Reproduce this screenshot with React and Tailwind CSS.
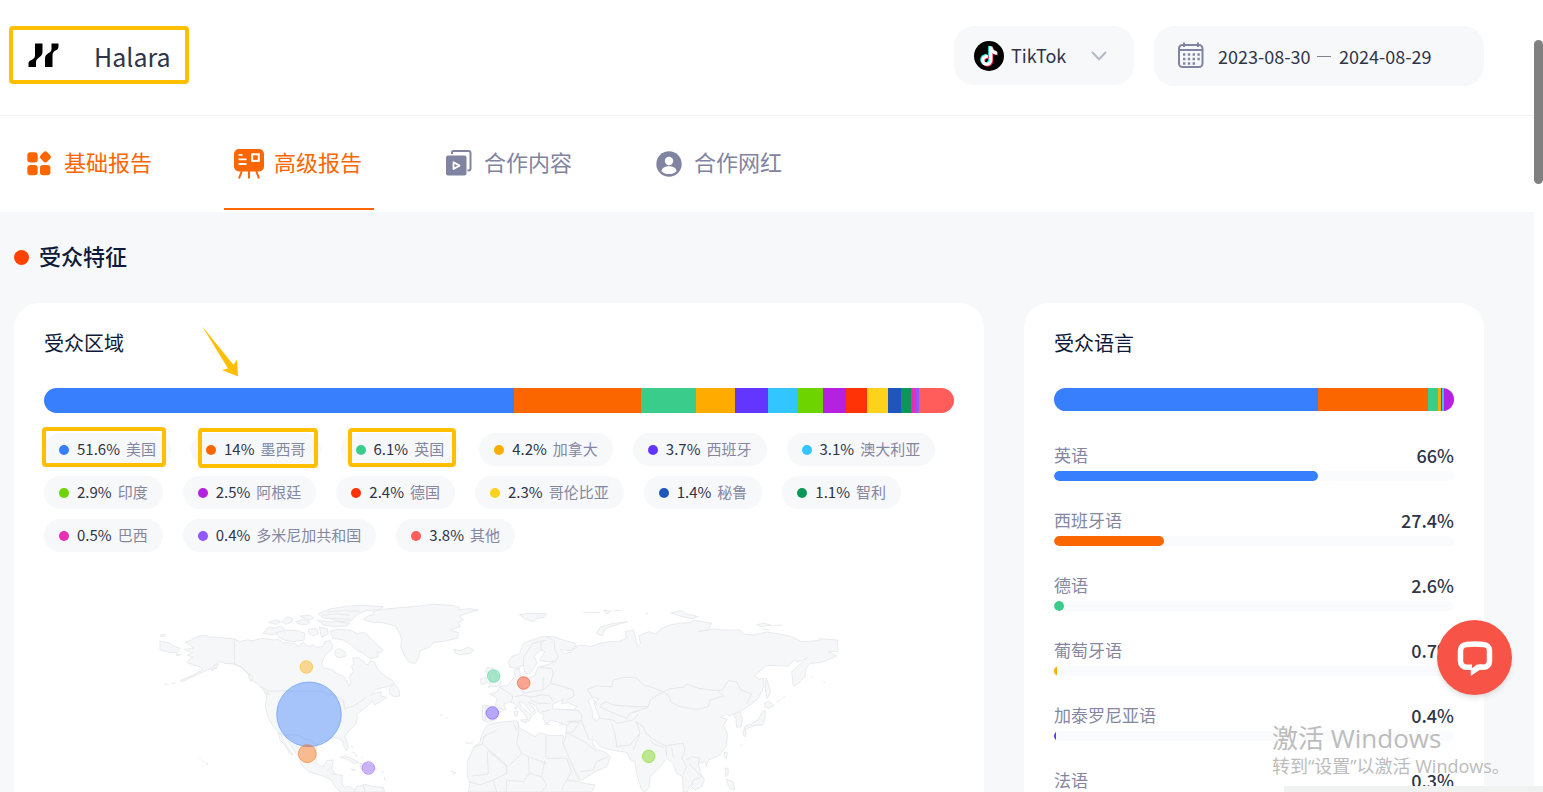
import React from "react";

const REGIONS = [
  { pct: 51.6, name: "美国", color: "#387ffd", mark: "-left-[2px] right-[5px] -top-[6px] -bottom-[1px]" },
  { pct: 14, name: "墨西哥", color: "#fc6600", mark: "left-[7px] right-[3px] -top-[5px] -bottom-[2px]" },
  { pct: 6.1, name: "英国", color: "#3acc8b", mark: "left-[7px] right-[3px] -top-[5px] -bottom-[1px]" },
  { pct: 4.2, name: "加拿大", color: "#ffab00" },
  { pct: 3.7, name: "西班牙", color: "#6236ff" },
  { pct: 3.1, name: "澳大利亚", color: "#33c5ff" },
  { pct: 2.9, name: "印度", color: "#6dd400" },
  { pct: 2.5, name: "阿根廷", color: "#b620e0" },
  { pct: 2.4, name: "德国", color: "#ff3306" },
  { pct: 2.3, name: "哥伦比亚", color: "#fcd31a" },
  { pct: 1.4, name: "秘鲁", color: "#2056bb" },
  { pct: 1.1, name: "智利", color: "#0d9757" },
  { pct: 0.5, name: "巴西", color: "#e92db5" },
  { pct: 0.4, name: "多米尼加共和国", color: "#9257ff" },
  { pct: 3.8, name: "其他", color: "#ff5c5c" },
];

const LANGUAGES = [
  { pct: 66, name: "英语", color: "#387ffd" },
  { pct: 27.4, name: "西班牙语", color: "#fc6600" },
  { pct: 2.6, name: "德语", color: "#3acc8b" },
  { pct: 0.7, name: "葡萄牙语", color: "#ffab00" },
  { pct: 0.4, name: "加泰罗尼亚语", color: "#6236ff" },
  { pct: 0.3, name: "法语", color: "#33c5ff" },
];

const LANGUAGE_BAR = [...LANGUAGES, { pct: 2.6, name: "其他", color: "#b620e0" }];

const BUBBLES = [
  { x: 469, y: 231, r: 19, color: "#ffab00" },
  { x: 477, y: 373, r: 97, color: "#387ffd" },
  { x: 472, y: 491, r: 27, color: "#fc6600" },
  { x: 655, y: 534, r: 19, color: "#9257ff" },
  { x: 1031, y: 258, r: 19, color: "#3acc8b" },
  { x: 1121, y: 279, r: 19, color: "#ff3306" },
  { x: 1027, y: 369, r: 19, color: "#6236ff" },
  { x: 1496, y: 499, r: 19, color: "#6dd400" },
];

function HalaraLogo() {
  return (
    <svg width="32" height="26" viewBox="0 0 32 26" aria-hidden="true">
      <path d="M8 1.500H15.500V10C15.500 13 13.500 14.500 11.500 16C9.500 17.500 9 18.500 9 20.500V25H1.500V21.500C1.500 19.500 2.500 19 4 18.200C6.500 17 8 16 8 13.500Z" />
      <path d="M24.500 1.500H31.500V4.500C31.500 7 30 7.700 28.500 8.500C26.500 9.500 25.500 11 25.500 13.500V25H18V16.500C18 14 19 12.800 21 11.500C23.500 10 24.500 9 24.500 7Z" />
    </svg>
  );
}

function TikTokMark() {
  const note = "M15.200 5.500H18.300C18.500 8.300 20.300 10.200 23 10.400V13.500C21.300 13.500 19.700 13 18.400 12V18.500C18.400 25.600 9.500 27 7.600 21.300C6.200 17 9.600 13.100 13.800 13.700V17C11.800 16.500 10.200 17.800 10.300 19.600C10.600 22.600 15.200 22.600 15.200 18.900Z";
  return (
    <svg width="30" height="30" viewBox="0 0 30 30" aria-hidden="true">
      <circle cx="15" cy="15" r="15" fill="#000" />
      <path d={note} fill="#25f4ee" transform="translate(-1 -0.6)" />
      <path d={note} fill="#fe2c55" transform="translate(0.9 0.8)" />
      <path d={note} fill="#fff" />
    </svg>
  );
}

function CalendarIcon() {
  return (
    <svg width="26" height="28" viewBox="0 0 26 28" fill="none" stroke="#8084a0" aria-hidden="true">
      <rect x="1" y="3" width="23.500" height="22" rx="3.500" strokeWidth="2" />
      <path d="M1 8H25" strokeWidth="2" />
      <path d="M6 0.500V5M20 0.500V5" strokeWidth="2" />
      <path d="M5 12.500H22M5 17H22M5 21.500H17" strokeWidth="2.400" strokeDasharray="2.400 2.400" />
    </svg>
  );
}

function BasicIcon() {
  return (
    <svg width="30" height="30" viewBox="0 0 30 30" fill="#fc6600" aria-hidden="true">
      <rect x="3.300" y="3.200" width="10.400" height="10.200" rx="3" />
      <rect x="3.300" y="16" width="10.400" height="10.300" rx="3" />
      <rect x="16" y="16" width="10.400" height="10.300" rx="3" />
      <rect x="16.800" y="3.300" width="9.200" height="9.200" rx="2.400" transform="rotate(45 21.400 7.900)" />
    </svg>
  );
}

function AdvancedIcon() {
  return (
    <svg width="30" height="32" viewBox="0 0 30 32" fill="none" aria-hidden="true">
      <rect x="0" y="1" width="30" height="22.500" rx="5" fill="#fc6600" />
      <path d="M4.500 6.800H8.500M4.500 11.400H12.500M4.500 16H12.500" stroke="#fff" strokeWidth="1.800" />
      <rect x="18.200" y="6.300" width="6.600" height="6.600" stroke="#fff" strokeWidth="2" />
      <path d="M7.800 23L5 30.500M15 23V30.500M22.200 23L25 30.500" stroke="#fc6600" strokeWidth="2" />
    </svg>
  );
}

function ContentIcon() {
  return (
    <svg width="30" height="30" viewBox="0 0 30 30" fill="none" aria-hidden="true">
      <path d="M8 5V3.500A1.500 1.500 0 0 1 9.500 2H24.500A2 2 0 0 1 26.500 4V19.500A2 2 0 0 1 24.500 21.500H23.500" stroke="#8084a0" strokeWidth="2" />
      <rect x="2" y="6.500" width="20.500" height="20" rx="2" fill="#8084a0" />
      <path d="M9.500 13.200V20L15.500 16.600Z" stroke="#fff" strokeWidth="1.800" strokeLinejoin="round" />
    </svg>
  );
}

function CreatorIcon() {
  return (
    <svg width="30" height="30" viewBox="0 0 30 30" aria-hidden="true">
      <circle cx="15" cy="15" r="12.700" fill="#8084a0" />
      <circle cx="15" cy="12" r="4.200" fill="#fff" />
      <path d="M7.500 22.200C7.500 15.600 22.500 15.600 22.500 22.200C18.500 26 11.500 26 7.500 22.200Z" fill="#fff" />
    </svg>
  );
}

const TABS = [
  { label: "基础报告", Icon: BasicIcon, tone: "border-transparent text-[#fc6600]" },
  { label: "高级报告", Icon: AdvancedIcon, tone: "border-[#fc6600] text-[#fc6600]" },
  { label: "合作内容", Icon: ContentIcon, tone: "border-transparent text-[#8084a0]" },
  { label: "合作网红", Icon: CreatorIcon, tone: "border-transparent text-[#8084a0]" },
];

function WorldMap() {
  return (
    <svg className="block w-full" viewBox="-318 0 2730 606" role="img" aria-label="受众区域地图">
      <g fill="#f6f7f9" stroke="#e9eaed" strokeWidth="3" strokeLinejoin="round">
        {/* North America */}
        <path d="M106 157L125 150L130 145L150 138L165 136L180 141L210 143L253 147L270 155L290 150L310 152L330 146L350 146L370 150L385 148L400 158L430 160L445 168L460 158L475 170L490 164L500 172L520 168L525 155L540 152L548 165L545 180L530 190L520 205L515 225L525 235L545 238L560 250L580 258L588 270L597 288L603 275L598 260L610 245L605 228L612 220L608 205L625 203L640 212L645 222L655 224L662 212L672 215L682 235L690 245L705 258L725 270L733 280L715 290L695 293L675 300L662 315L680 308L695 306L692 318L710 322L690 335L675 345L667 332L650 350L640 357L630 365L620 375L622 388L618 402L605 415L590 430L585 440L592 460L595 475L590 483L582 470L577 452L565 445L550 443L535 452L520 450L505 460L499 475L495 490L500 520L508 528L522 528L530 512L550 510L545 535L555 553L577 556L575 580L582 592L600 590L620 606L570 606L555 590L545 570L525 560L500 552L475 545L455 525L448 505L432 480L415 455L400 435L390 430L402 455L415 475L430 495L420 492L405 465L390 450L385 425L370 410L355 385L346 350L350 320L342 300L335 295L322 280L310 275L300 262L290 245L275 232L250 222L225 220L208 214L190 228L205 222L200 235L175 238L155 248L125 262L95 275L90 272L130 255L158 240L150 230L130 225L112 218L118 208L130 202L112 195L128 188L103 178L130 175L120 165Z" />
        {/* Arctic archipelago */}
        <path d="M340 130L355 112L375 115L390 108L405 118L390 130L362 134Z" />
        <path d="M378 128L410 120L440 122L465 130L462 150L430 155L402 150L385 140Z" />
        <path d="M355 98L378 90L392 95L380 103Z M395 95L412 80L428 86L424 97L408 102Z M438 95L460 88L480 96L470 104L445 102Z" />
        <path d="M450 78L480 76L492 84L475 90Z M475 118L500 115L505 130L490 138L476 130Z M508 112L532 116L535 132L515 142Z" />
        <path d="M502 90L530 95L560 96L600 99L590 108L550 110L520 104Z" />
        <path d="M505 72L525 62L545 56L590 49L640 46L700 50L690 58L650 62L622 72L605 92L570 95L540 86L520 84Z" />
        <path d="M515 76L560 72L600 76M530 66L580 62L630 64M525 84L570 86L600 88" fill="none" />
        <path d="M540 125L560 118L600 120L620 130L645 128L665 148L682 165L700 180L690 190L680 184L686 200L660 206L640 190L620 180L600 162L580 150L550 145Z" />
        <path d="M555 183L568 175L585 186L588 198L570 204L557 198Z" />
        <path d="M30 154L55 158L70 168L90 175L82 188L55 186L30 180Z M32 134L46 134L44 139L32 139Z M78 192L94 194L80 197Z" />
        <path d="M185 232L196 234L186 243Z M298 250L308 262L304 274L296 262Z M333 288L350 300L358 314L345 308Z" />
        <path d="M718 295L735 283L748 300L748 318L732 320L720 312Z" />
        <path d="M570 502L585 498L605 505L628 518L612 520L592 508Z M630 520L645 522L668 528L680 538L655 544L632 536Z M604 537L616 539L610 542Z" />
        <path d="M604 468L612 474M606 486L618 492L622 502M632 500L640 508M148 505L152 508M158 512L164 516M166 518L174 522L170 526M694 543L702 548M703 560L704 572M42 282L56 283M64 281L76 279" fill="none" />
        <path d="M612 606L620 590L645 583L668 590L700 592L704 606Z" />
        {/* Greenland */}
        <path d="M640 88L655 78L672 72L668 64L700 58L740 54L790 50L850 43L905 46L928 52L925 60L960 56L985 60L950 70L930 78L940 90L925 97L930 110L900 120L926 128L922 145L890 152L850 158L838 172L810 182L805 205L795 221L775 215L762 195L752 170L755 148L748 128L735 108L700 98L660 96Z" />
        <path d="M911 178L930 182L955 172L972 180L960 190L930 194L916 190Z" />
      </g>
      <g transform="translate(750 0)" fill="#f6f7f9" stroke="#e9eaed" strokeWidth="3" strokeLinejoin="round">
        {/* Eurasia */}
        <path d="M325 215L335 200L360 190L370 160L395 150L425 140L460 140L490 150L525 160L530 172L510 182L480 178L495 190L515 186L520 172L545 165L570 170L600 160L632 155L655 155L680 145L676 125L700 120L706 140L712 170L722 160L716 138L745 125L768 132L785 115L810 105L840 100L870 98L880 90L935 100L925 118L895 125L940 117L970 120L1020 120L1030 132L1060 135L1100 126L1170 138L1205 155L1257 152L1257 146L1313 150L1313 185L1284 185L1310 198L1265 217L1230 220L1218 235L1215 260L1195 280L1180 288L1175 245L1192 230L1222 203L1195 215L1182 210L1165 228L1100 226L1062 258L1078 268L1090 264L1092 290L1075 325L1050 345L1020 365L1027 390L1023 410L1010 412L1008 388L1000 372L988 378L980 372L962 382L982 388L970 405L982 430L980 465L960 495L925 510L918 530L915 515L895 520L900 545L913 570L905 590L885 600L870 585L862 606L850 606L848 560L830 550L820 520L800 505L785 525L750 560L748 590L735 606L725 600L710 550L705 515L692 510L680 487L650 483L615 475L600 470L590 455L575 447L580 465L592 480L612 485L632 500L620 530L585 545L543 572L525 540L505 500L490 460L497 440L500 405L470 395L450 390L440 404L428 385L432 375L415 365L408 348L385 335L408 365L400 375L372 340L358 335L362 350L390 372L395 380L385 395L378 378L350 345L330 335L312 342L318 358L295 370L290 388L265 397L247 390L248 345L285 350L292 325L270 312L292 305L300 290L325 285L335 270L345 260L343 240L358 235L362 260L385 265L405 255L415 230L435 227L465 215L440 215L418 210L435 185L420 180L402 200L412 218L390 250L375 250L370 225L350 235L330 232Z" />
        <path d="M457 357L460 342L478 334L490 328L484 342L505 338L530 350L520 362L485 358Z M563 330L580 322L598 326L582 340L590 362L600 382L590 392L578 385L576 360Z" fill="#fff" />
        {/* Africa */}
        <path d="M262 405L290 398L350 392L360 415L405 440L420 428L445 436L490 437L488 460L505 500L525 545L540 578L585 585L575 606L205 606L210 575L202 560L202 515L220 475L240 455L245 435Z" />
        {/* Islands */}
        <path d="M265 292L300 287L304 275L294 262L280 235L262 232L256 245L268 252L272 272Z M240 268L258 262L262 278L244 284Z" />
        <path d="M358 74L385 70L440 72L430 82L410 86L400 96L375 86Z M590 130L600 112L630 102L682 95L650 104L615 116L606 138Z" />
        <path d="M345 350L350 352L348 358L344 356Z M343 364L353 364L352 378L344 376Z M362 390L382 388L378 398L364 394Z M432 402L450 404M478 407L490 402M550 66L600 68M610 60L634 64L622 72Z M640 62L664 62M120 375L128 376M136 384L142 384M196 458L206 460L220 458M152 544L168 548L160 554" />
        <path d="M812 68L845 62L860 72L895 80L875 86L840 78Z M1070 104L1090 100L1115 106L1085 110Z M1120 106L1146 106M1086 116L1110 120M736 72L744 70" />
        <path d="M1098 264L1106 285L1112 308L1100 326L1096 295Z M1093 340L1105 334L1122 346L1105 356L1095 350Z M1095 360L1096 380L1088 405L1065 406L1045 414L1032 420L1036 408L1055 402L1075 388L1088 365Z M1030 420L1038 422L1036 440L1030 436Z M1130 336L1142 330M1148 324L1156 318M1232 258L1240 262M1270 274L1276 278M974 486L982 488L978 506L972 500Z M975 535L984 534L985 550L978 560Z M980 568L998 575L1005 600L990 596L982 580Z M1020 470L1028 462" />
      </g>
      {/* Country borders */}
      <g fill="none" stroke="#e6e7ea" strokeWidth="3" strokeLinejoin="round">
        <path d="M253 147V222L275 232L300 258M355 303H515L530 310L550 314L580 330L584 356L610 348L635 332L652 318M382 428L405 436L430 434L448 436L470 450L480 448L500 466M530 545L545 530M545 552L560 552M640 585L645 606" />
        <g transform="translate(750 0)">
          <path d="M370 225L372 200L385 180L400 160L430 152L440 152M425 182L422 160L432 152M465 215L475 200L465 180L462 152L440 140M420 232L455 235L460 250L452 280L430 300M452 280L490 290L520 300L522 318L500 330M430 262L428 300L395 305L370 310L365 285M345 320L370 315L395 322L425 314L450 318L460 335M390 328L412 340L452 340M300 292L320 305L338 318L335 335M285 350L310 358M258 347L255 392M425 366L450 360M500 358L535 362L545 375L545 392L500 395M545 392L555 420L568 450M500 405L515 395L540 398M500 430L520 425L535 400M505 430L560 460L590 485M540 545L580 540L590 515L625 500M590 345L570 310L562 298L590 288L635 290L640 270L670 262L700 262L712 265L730 285L750 290L775 300L790 305L765 320L750 330L745 350L705 350L640 345L620 335L600 345M790 305L810 296L850 292L860 282L895 295L935 300L965 302L985 272L1010 275L1022 300L1055 312L1040 340M790 305L808 320L812 335L840 350L890 358L925 350L930 330L972 318L955 305M600 350L630 365L680 385L690 370L745 352M600 385L640 390L650 400L700 390L715 372M635 400L645 430L650 470L690 465L720 430L710 395M705 395L730 410L738 430L755 445L795 468L830 462L850 460L855 480L845 505L860 530L848 555M720 430L700 480M750 450L760 462L790 472M798 470L800 500M815 475L820 500M858 510L875 500L900 505L895 520M868 520L885 540L905 560L880 570L875 585M1000 372L1020 365" />
          <path d="M355 395L355 430L350 460L365 490L325 530L248 462L250 440L290 420M248 462L218 472M262 485L265 552L215 558M262 480L320 530L320 550L280 570M365 490L385 500L438 520M438 436V505H500M385 500L388 550L370 575L320 570M435 510L425 560L440 585L425 606M388 550L425 560M500 505L515 545L500 570L485 600M205 575L240 585L280 570L290 606M320 570L318 606M500 570L535 575M350 420L340 400" />
        </g>
      </g>
      {BUBBLES.map((b) => (
        <circle key={b.color} cx={b.x} cy={b.y} r={b.r} fill={b.color} fillOpacity="0.42" stroke={b.color} strokeOpacity="0.45" strokeWidth="3" />
      ))}
    </svg>
  );
}

function StackedBar({ items, className }) {
  return (
    <div className={`flex overflow-hidden rounded-full ${className}`}>
      {items.map((it) => (
        <div key={it.name} style={{ width: `${it.pct}%`, backgroundColor: it.color }} />
      ))}
    </div>
  );
}

export default function App() {
  return (
    <div className="relative flex h-screen overflow-hidden bg-white font-['Noto_Sans_CJK_SC',sans-serif] text-[#2f3548]">
      <div className="flex min-w-0 flex-1 flex-col">
        <header className="flex h-[116px] shrink-0 items-start justify-between border-b border-[#f2f3f5] pr-[50px] pl-[9px] pt-[26px]">
          <div className="flex h-[58px] w-[180px] items-center rounded border-4 border-[#ffbf00] pl-[14px]">
            <HalaraLogo />
            <span className="ml-[35px] pt-[2px] text-[25px] leading-[30px]">Halara</span>
          </div>
          <div className="flex gap-5">
            <label className="relative flex h-[59px] w-[180px] items-center rounded-[20px] bg-[#f7f8fa] pl-5">
              <TikTokMark />
              <select aria-label="平台" className="h-full flex-1 appearance-none bg-transparent pl-[7px] text-[18px] outline-none">
                <option>TikTok</option>
              </select>
              <svg className="pointer-events-none absolute right-[27px]" width="16" height="10" viewBox="0 0 16 10" fill="none" stroke="#b4bac6" strokeWidth="2.2" aria-hidden="true">
                <path d="M1 1L8 8.200L15 1" />
              </svg>
            </label>
            <div className="flex h-[60px] w-[330px] items-center rounded-[20px] bg-[#f7f8fa] pl-6">
              <CalendarIcon />
              <input aria-label="开始日期" className="ml-[14px] w-[94px] bg-transparent text-[18px] outline-none" defaultValue="2023-08-30" />
              <span className="ml-[5px] h-px w-[14px] bg-[#7d8190]" />
              <input aria-label="结束日期" className="ml-2 w-[94px] bg-transparent text-[18px] outline-none" defaultValue="2024-08-29" />
            </div>
          </div>
        </header>

        <nav className="flex h-[96px] shrink-0 gap-[60px] px-[14px]">
          {TABS.map(({ label, Icon, tone }) => (
            <button key={label} type="button" className={`flex h-[94px] w-[150px] items-center gap-[10px] border-b-2 pt-[3px] pl-[10px] text-[22px] ${tone}`}>
              <Icon />
              <span className="pb-1 whitespace-nowrap">{label}</span>
            </button>
          ))}
        </nav>

        <main className="flex-1 bg-[#f7f8fa] pt-[30px] pr-[50px] pl-[14px]">
          <h1 className="flex h-[31px] items-center gap-[10px] text-[22px] font-medium text-[#0d1a38]">
            <span className="size-[15px] rounded-full bg-[#ff4200]" />
            <span className="pb-1">受众特征</span>
          </h1>
          <div className="mt-[30px] flex items-stretch gap-10">
            <section className="relative min-w-0 flex-1 rounded-[25px] bg-white px-[30px] pt-[25px] pb-10">
              <h2 className="text-[20px] leading-[30px] text-[#0d1a38]">受众区域</h2>
              <svg className="absolute top-[22px] left-[187px]" width="40" height="54" viewBox="0 0 40 54" fill="#ffbf00" aria-hidden="true">
                <path d="M1 1L32.500 40L36 34.500L37 51.500L21 45L27 43.500Z" />
              </svg>
              <StackedBar items={REGIONS} className="mt-[30px] h-[25px]" />
              <ul className="mt-5 flex flex-wrap gap-x-5 gap-y-[10px]">
                {REGIONS.map((r) => (
                  <li key={r.name} className="relative flex h-[33px] items-center rounded-full bg-[#f7f8fa] px-[15px] text-[15px]">
                    <span className="size-[10px] rounded-full" style={{ backgroundColor: r.color }} />
                    <span className="ml-2">{r.pct}%</span>
                    <span className="ml-[6px] text-[#84879f]">{r.name}</span>
                    {r.mark && <span className={`absolute rounded border-4 border-[#ffbf00] ${r.mark}`} />}
                  </li>
                ))}
              </ul>
              <div className="mt-[38px]">
                <WorldMap />
              </div>
            </section>

            <section className="w-[460px] shrink-0 rounded-[25px] bg-white px-[30px] pt-[25px]">
              <h2 className="text-[20px] leading-[30px] text-[#0d1a38]">受众语言</h2>
              <StackedBar items={LANGUAGE_BAR} className="mt-[30px] h-[23px]" />
              <ul className="mt-[30px] flex flex-col gap-[25px]">
                {LANGUAGES.map((l) => (
                  <li key={l.name}>
                    <div className="flex h-[30px] items-start justify-between text-[18px] leading-[28px]">
                      <span className="text-[17px] text-[#84879f]">{l.name}</span>
                      <span className="font-medium">{l.pct}%</span>
                    </div>
                    <div className="h-[10px] overflow-hidden rounded-full bg-[#fafbfc]">
                      <div className="h-full rounded-full" style={{ width: `${l.pct}%`, backgroundColor: l.color }} />
                    </div>
                  </li>
                ))}
              </ul>
            </section>
          </div>
        </main>
      </div>

      <div className="w-[9px] shrink-0 bg-white pt-10">
        <div className="h-[144px] rounded-full bg-[#808080]" />
      </div>

      <button type="button" aria-label="在线客服" className="absolute right-[31px] bottom-[97px] flex size-[75px] items-center justify-center rounded-full bg-[#f75447] shadow-md">
        <svg width="36" height="36" viewBox="0 0 36 36" fill="none" aria-hidden="true">
          <path d="M15 27.300H9.500A6 6 0 0 1 3.500 21.300V10.500A6 6 0 0 1 9.500 4.500C15 3.700 21 3.700 26.500 4.500A6 6 0 0 1 32.500 10.500V21.300A6 6 0 0 1 26.500 27.300H22" stroke="#fff" strokeWidth="5.500" />
          <path d="M13.800 36V29L20 24.500H26V30H22.500Z" fill="#fff" />
        </svg>
      </button>

      <div className="pointer-events-none absolute right-[33px] bottom-[14px] w-[238px] font-['Open_Sans','Noto_Sans_CJK_SC',sans-serif] whitespace-nowrap text-[#bcbcbc]">
        <p className="text-[26px] leading-[32px]">激活 Windows</p>
        <p className="text-[18px] leading-[24px]">转到“设置”以激活 Windows。</p>
      </div>
      <div className="absolute right-0 bottom-0 h-[6px] w-[259px] bg-[#f0f1f1]" />
    </div>
  );
}
